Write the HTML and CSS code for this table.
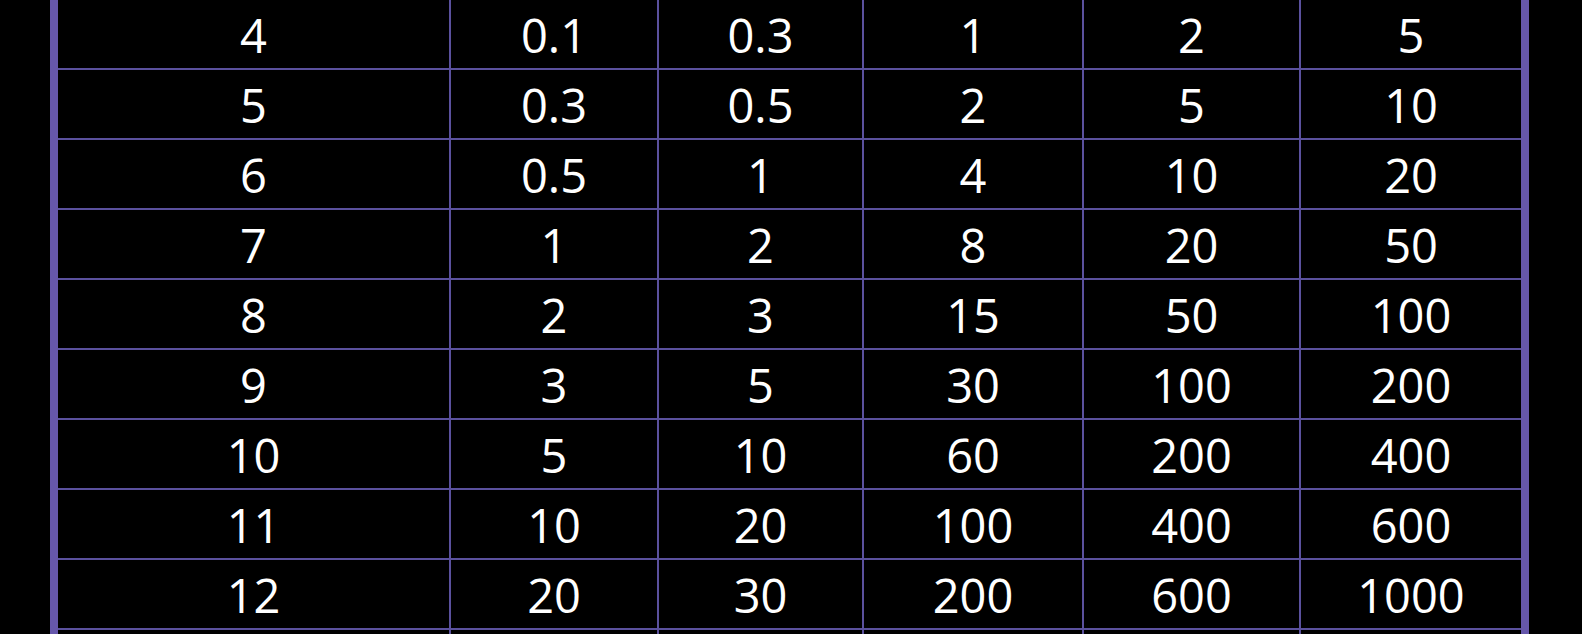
FILE: index.html
```html
<!DOCTYPE html>
<html>
<head>
<meta charset="utf-8">
<link rel="stylesheet" href="styles.css">
</head>
<body>
<div class="frame">
  <div class="grid">
    <div class="c">4</div><div class="c">0.1</div><div class="c">0.3</div><div class="c">1</div><div class="c">2</div><div class="c">5</div>
    <div class="c">5</div><div class="c">0.3</div><div class="c">0.5</div><div class="c">2</div><div class="c">5</div><div class="c">10</div>
    <div class="c">6</div><div class="c">0.5</div><div class="c">1</div><div class="c">4</div><div class="c">10</div><div class="c">20</div>
    <div class="c">7</div><div class="c">1</div><div class="c">2</div><div class="c">8</div><div class="c">20</div><div class="c">50</div>
    <div class="c">8</div><div class="c">2</div><div class="c">3</div><div class="c">15</div><div class="c">50</div><div class="c">100</div>
    <div class="c">9</div><div class="c">3</div><div class="c">5</div><div class="c">30</div><div class="c">100</div><div class="c">200</div>
    <div class="c">10</div><div class="c">5</div><div class="c">10</div><div class="c">60</div><div class="c">200</div><div class="c">400</div>
    <div class="c">11</div><div class="c">10</div><div class="c">20</div><div class="c">100</div><div class="c">400</div><div class="c">600</div>
    <div class="c">12</div><div class="c">20</div><div class="c">30</div><div class="c">200</div><div class="c">600</div><div class="c">1000</div>
    <div class="c"></div><div class="c"></div><div class="c"></div><div class="c"></div><div class="c"></div><div class="c"></div>
  </div>
</div>
</body>
</html>
```

FILE: styles.css
```css
html, body {
  margin: 0;
  padding: 0;
  background: #000;
  overflow: hidden;
}
body {
  height: 634px;
  font-family: "Open Sans", "Noto Sans", sans-serif;
}
.frame {
  margin-left: 50px;
  width: 1463px;
  border-left: 8px solid #6657ab;
  border-right: 8px solid #6657ab;
}
.grid {
  display: grid;
  grid-template-columns: 393px 208px 205px 220px 217px 220px;
}
.c {
  box-sizing: border-box;
  height: 70px;
  border-right: 2px solid #5b519e;
  border-bottom: 2px solid #5b519e;
  display: flex;
  align-items: center;
  justify-content: center;
  color: #fff;
  font-size: 47px;
  line-height: 1;
  padding-top: 2px;
}
.c:nth-child(6n) {
  border-right: none;
}
```
